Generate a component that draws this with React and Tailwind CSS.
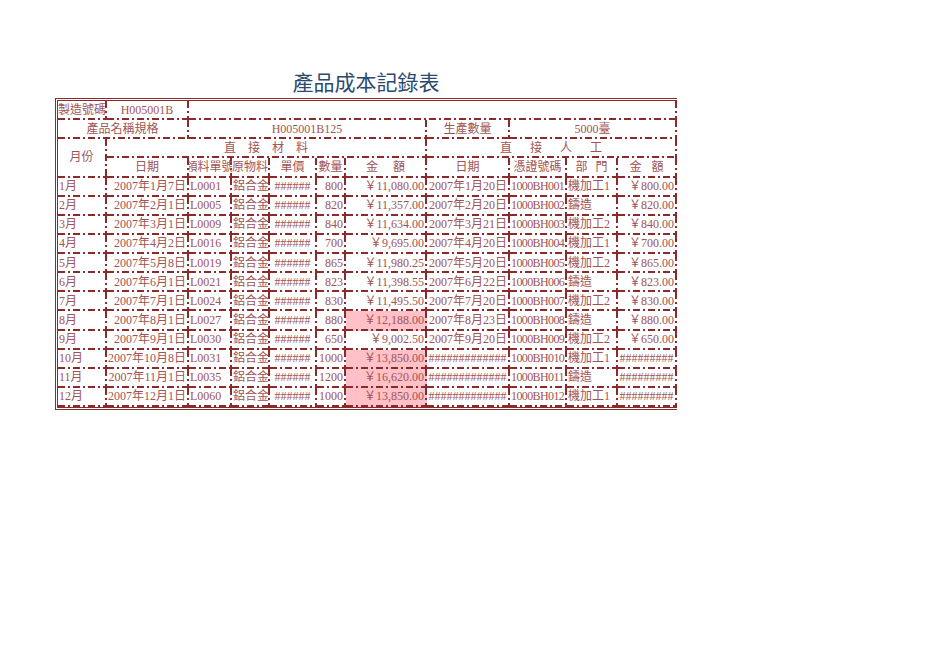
import React from "react";

const BORDER =
  "bg-no-repeat [background-image:repeating-linear-gradient(90deg,#8b2a2a_0_7px,transparent_7px_10px,#8b2a2a_10px_12px,transparent_12px_15px),repeating-linear-gradient(180deg,#8b2a2a_0_7px,transparent_7px_10px,#8b2a2a_10px_12px,transparent_12px_15px)] [background-size:100%_2px,2px_100%] [background-position:left_bottom,right_top]";

const L = "justify-start pl-[1px] pr-[2px]";
const R = "justify-end pr-[3px]";
const M = "justify-center pr-[2px]";

function C({ children, cls = "" }) {
  return (
    <div
      className={`${BORDER} flex items-center overflow-hidden whitespace-nowrap pb-[2px] ${cls}`}
    >
      {children}
    </div>
  );
}

function Sp({ text, gap }) {
  return (
    <span className={`flex ${gap}`}>
      {text.split("").map((c, i) => (
        <span key={i}>{c}</span>
      ))}
    </span>
  );
}

const rows = [
  ["1月", "2007年1月7日", "L0001", "800", "￥11,080.00", "2007年1月20日", "1000BH001", "機加工1", "￥800.00", false],
  ["2月", "2007年2月1日", "L0005", "820", "￥11,357.00", "2007年2月20日", "1000BH002", "鑄造", "￥820.00", false],
  ["3月", "2007年3月1日", "L0009", "840", "￥11,634.00", "2007年3月21日", "1000BH003", "機加工2", "￥840.00", false],
  ["4月", "2007年4月2日", "L0016", "700", "￥9,695.00", "2007年4月20日", "1000BH004", "機加工1", "￥700.00", false],
  ["5月", "2007年5月8日", "L0019", "865", "￥11,980.25", "2007年5月20日", "1000BH005", "機加工2", "￥865.00", false],
  ["6月", "2007年6月1日", "L0021", "823", "￥11,398.55", "2007年6月22日", "1000BH006", "鑄造", "￥823.00", false],
  ["7月", "2007年7月1日", "L0024", "830", "￥11,495.50", "2007年7月20日", "1000BH007", "機加工2", "￥830.00", false],
  ["8月", "2007年8月1日", "L0027", "880", "￥12,188.00", "2007年8月23日", "1000BH008", "鑄造", "￥880.00", true],
  ["9月", "2007年9月1日", "L0030", "650", "￥9,002.50", "2007年9月20日", "1000BH009", "機加工2", "￥650.00", false],
  ["10月", "2007年10月8日", "L0031", "1000", "￥13,850.00", "#############", "1000BH010", "機加工1", "#########", true],
  ["11月", "2007年11月1日", "L0035", "1200", "￥16,620.00", "#############", "1000BH011", "鑄造", "#########", true],
  ["12月", "2007年12月1日", "L0060", "1000", "￥13,850.00", "#############", "1000BH012", "機加工1", "#########", true],
];

export default function App() {
  return (
    <div className="min-h-[662px] w-[936px] bg-white pl-[55px] pt-[64px]">
      <div className="w-[622px]">
        <div className="flex h-[34px] items-center justify-center font-['Noto_Sans_CJK_TC',sans-serif] text-[21px] leading-none text-[#2a4a70]">
          產品成本記錄表
        </div>
        <div className="grid grid-cols-[49px_82px_43px_38px_47px_29px_81px_83px_57px_51px_59px] grid-rows-[repeat(16,19.125px)] border-[3px] border-r-0 border-double border-[#8b2a2a] font-['Liberation_Serif','Noto_Sans_CJK_TC',serif] text-[12px] leading-none text-[#a05454]">
          {/* row 1 */}
          <C cls="justify-start">製造號碼</C>
          <C cls={M}>H005001B</C>
          <C cls={`col-span-9 ${M}`}></C>
          {/* row 2 */}
          <C cls={`col-span-2 ${M}`}>產品名稱規格</C>
          <C cls={`col-span-5 ${M}`}>H005001B125</C>
          <C cls={M}>生產數量</C>
          <C cls={`col-span-3 ${M}`}>5000臺</C>
          {/* row 3 */}
          <C cls={`row-span-2 ${M}`}>月份</C>
          <C cls={`col-span-6 ${M}`}>
            <Sp text="直接材料" gap="gap-[12px]" />
          </C>
          <C cls={`col-span-4 ${M}`}>
            <Sp text="直接人工" gap="gap-[18px]" />
          </C>
          {/* row 4 */}
          <C cls={M}>日期</C>
          <C cls={M}>領料單號</C>
          <C cls={M}>原物料</C>
          <C cls={M}>單價</C>
          <C cls={M}>數量</C>
          <C cls={M}>
            <Sp text="金額" gap="gap-[15px]" />
          </C>
          <C cls={M}>日期</C>
          <C cls={M}>憑證號碼</C>
          <C cls={M}>
            <Sp text="部門" gap="gap-[8px]" />
          </C>
          <C cls={M}>
            <Sp text="金額" gap="gap-[10px]" />
          </C>
          {/* data */}
          {rows.map((r) => (
            <React.Fragment key={r[0]}>
              <C cls={L}>{r[0]}</C>
              <C cls={R}>{r[1]}</C>
              <C cls={L}>{r[2]}</C>
              <C cls={L}>鋁合金</C>
              <C cls={M}>######</C>
              <C cls={R}>{r[3]}</C>
              <C cls={`${R} ${r[9] ? "bg-[#ffc0c8]" : ""}`}>{r[4]}</C>
              <C cls={r[5].startsWith("#") ? M : R}>{r[5]}</C>
              <C cls="justify-start pl-[1px] tracking-[-0.6px]">{r[6]}</C>
              <C cls={L}>{r[7]}</C>
              <C cls={r[8].startsWith("#") ? M : R}>{r[8]}</C>
            </React.Fragment>
          ))}
        </div>
      </div>
    </div>
  );
}
